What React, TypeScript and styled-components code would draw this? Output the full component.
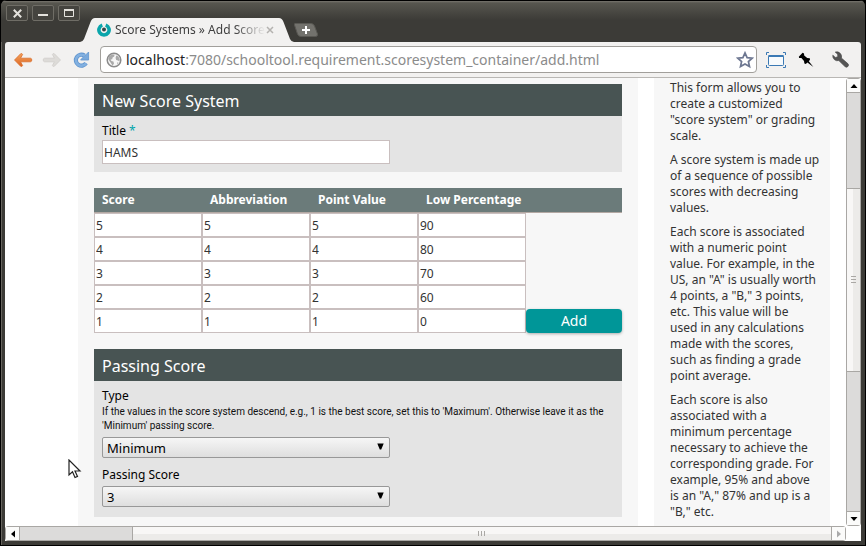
import React from "react";
import styled, { createGlobalStyle, css } from "styled-components";

const GlobalStyle = createGlobalStyle`
  *, *::before, *::after { box-sizing: border-box; }
  html, body, #root { height: 100%; }
  body {
    margin: 0;
    background: #000;
    color: #333;
    font-family: "Noto Sans", "Open Sans", sans-serif;
    font-size: 12px;
    line-height: 16px;
    overflow: hidden;
  }
  button, input, select { font: inherit; color: inherit; margin: 0; }
`;

/* ---------- window frame ---------- */

const BrowserWindow = styled.div`
  display: flex;
  flex-direction: column;
  height: 100vh;
  padding: 0 4px 4px;
  background: #3c3b37;
  border: 1px solid #000;
  border-top: 0;
  border-radius: 6px 6px 0 0;
  box-shadow: inset 1px 0 0 #66645e;
`;

const TitleBar = styled.header`
  display: flex;
  align-items: flex-start;
  flex: none;
  height: 42px;
  margin: 0 -4px;
  padding: 5px 5px 0;
  background: linear-gradient(#000 0, #000 1px, #77756e 1px, #57564f 3px, #3c3b37 20px);
  border-radius: 6px 6px 0 0;
`;

const WindowButtons = styled.div`
  display: flex;
  gap: 4px;
`;

const WindowButton = styled.button`
  display: grid;
  place-items: center;
  width: 22px;
  height: 16px;
  padding: 0;
  background: #45443f;
  border: 1px solid #6f6d66;
  border-radius: 2px;
`;

const Tab = styled.div`
  display: flex;
  align-items: flex-end;
  height: 24px;
  margin-top: 13px;
`;

const TabFace = styled.div`
  display: flex;
  align-items: center;
  width: 184px;
  height: 24px;
  padding: 0 4px 0 2px;
  background: #f2f1f0;
`;

const TabTitle = styled.span`
  flex: 1;
  margin-left: 4px;
  white-space: nowrap;
  font-size: 12px;
  color: #3f3f3f;
  mask-image: linear-gradient(to right, #000 80%, transparent 100%);
`;

const IconButton = styled.button<{ $w?: number }>`
  display: grid;
  place-items: center;
  flex: none;
  width: ${(p) => p.$w ?? 20}px;
  height: 20px;
  padding: 0;
  background: none;
  border: 0;
`;

const NewTabButton = styled(IconButton)`
  height: 14px;
  margin-top: 18px;
`;

const Toolbar = styled.nav`
  display: flex;
  align-items: center;
  flex: none;
  height: 36px;
  padding: 0 11px 0 8px;
  background: #f2f1f0;
  border-bottom: 1px solid #b9b7b4;
  border-radius: 3px 3px 0 0;
`;

const NavButtons = styled.div`
  display: flex;
  gap: 9px;
  margin-right: 9px;
`;

const AddressBox = styled.div`
  display: flex;
  align-items: center;
  flex: 1;
  gap: 4px;
  height: 27px;
  padding: 0 2px 0 5px;
  background: #fff;
  border: 1px solid #a19f9b;
  border-radius: 4px;
`;

const Address = styled.a`
  flex: 1;
  overflow: hidden;
  white-space: nowrap;
  font-size: 14px;
  line-height: 20px;
  color: #8b8b8b;
  text-decoration: none;
`;

const Host = styled.span`
  color: #222;
`;

const ToolButtons = styled.div`
  display: flex;
  align-items: center;
  gap: 10px;
  margin-left: 9px;

  & > :last-child { margin-left: 4px; }
`;

/* ---------- scroll bars ---------- */

const Viewport = styled.div`
  display: grid;
  grid-template-columns: minmax(0, 1fr) 15px;
  grid-template-rows: minmax(0, 1fr) 15px;
  flex: 1;
  min-height: 0;
  background: #fff;
`;

type Dir = { $vertical?: boolean };

const ScrollBar = styled.div<Dir>`
  display: flex;
  flex-direction: ${(p) => (p.$vertical ? "column" : "row")};
  background: #dcdbda;
  border: 1px solid #a9a7a4;
  border-radius: 3px;
`;

const ScrollButton = styled.button<Dir>`
  display: grid;
  place-items: center;
  flex: none;
  width: ${(p) => (p.$vertical ? "13px" : "14px")};
  height: ${(p) => (p.$vertical ? "14px" : "13px")};
  padding: 0;
  background: #fbfbfa;
  border: 0 solid #a9a7a4;
  &:first-child { ${(p) => (p.$vertical ? "border-bottom-width: 1px" : "border-right-width: 1px")}; }
  &:last-child { ${(p) => (p.$vertical ? "border-top-width: 1px" : "border-left-width: 1px")}; }
`;

const ScrollGap = styled.div<{ $grow: number }>`
  flex: ${(p) => p.$grow} 1 0;
`;

const ScrollThumb = styled.div<Dir & { $grow: number }>`
  display: flex;
  align-items: center;
  justify-content: center;
  flex: ${(p) => p.$grow} 1 0;
  border: 0 solid #a9a7a4;
  ${(p) =>
    p.$vertical
      ? css`
          border-width: 1px 0;
          background: linear-gradient(to right, #f8f7f6 50%, #ecebe9 50%);
        `
      : css`
          border-left-width: 1px;
          background: linear-gradient(#f8f7f6 50%, #ecebe9 50%);
        `}
`;

/* ---------- page ---------- */

const Page = styled.main`
  display: flex;
  gap: 16px;
  padding: 0 16px 0 73px;
  overflow: hidden;
`;

const Content = styled.form`
  display: flex;
  flex-direction: column;
  flex: 1;
  gap: 16px;
  min-width: 0;
  padding: 6px 16px 0;
  background: #f7f7f7;
`;

const Sidebar = styled.aside`
  flex: none;
  width: 176px;
  padding: 2px 0 0 16px;
  background: #f7f7f7;
`;

const Note = styled.p`
  margin: 0 0 8px;
  white-space: nowrap;
`;

const NoteLine = styled.span`
  display: block;
`;

const Section = styled.section`
  background: #e4e4e4;
`;

const SectionTitle = styled.h3`
  margin: 0;
  padding: 5px 8px 3px;
  background: #485453;
  color: #fff;
  font-size: 16px;
  font-weight: 400;
  line-height: 24px;
`;

const SectionBody = styled.div`
  display: flex;
  flex-direction: column;
  align-items: flex-start;
  padding: 7px 8px 8px;
`;

const Label = styled.label`
  margin-bottom: 1px;
  color: #000;
`;

const Required = styled.span`
  color: #00a5ab;
`;

const Hint = styled.p`
  margin: 0 0 4px;
  color: #111;
  font-family: Roboto, "Noto Sans", sans-serif;
  font-size: 10px;
  line-height: 14px;
`;

const TextInput = styled.input`
  display: block;
  width: 100%;
  height: 24px;
  padding: 0 1px;
  background: #fff;
  border: 1px solid #c9bfbf;
  border-radius: 0;
  outline: 0;
`;

const TitleInput = styled(TextInput)`
  width: 288px;
`;

const SelectBox = styled.div`
  display: grid;
  align-items: center;
  width: 288px;

  & + label { margin: 9px 0 3px; }
  &:last-child { margin-bottom: 2px; }
  & > * { grid-area: 1 / 1; }
  & > svg { justify-self: end; margin: 0 6px 2px 0; pointer-events: none; }
`;

const Select = styled.select`
  appearance: none;
  width: 100%;
  height: 21px;
  padding: 0 4px;
  background: linear-gradient(#f6f6f6, #dedede);
  border: 1px solid #989898;
  border-radius: 2px;
  color: #000;
  font-size: 13px;
`;

const ScoreTable = styled.table`
  width: 100%;
  table-layout: fixed;
  border-collapse: collapse;
  border-spacing: 0;
`;

const HeadCell = styled.th<{ $rest?: boolean }>`
  width: ${(p) => (p.$rest ? "auto" : "108px")};
  height: 25px;
  padding: 0 0 1px 8px;
  background: #6b7b7a;
  box-shadow: inset 0 -1px 0 #b3a8a3;
  color: #fff;
  font-weight: 700;
  text-align: left;
  white-space: nowrap;
`;

const Cell = styled.td`
  padding: 0;
`;

const AddButton = styled.button`
  display: block;
  width: 100%;
  height: 24px;
  padding: 0;
  background: #009698;
  border: 0;
  border-radius: 4px;
  box-shadow: 0 1px 3px rgba(0, 0, 0, 0.3);
  color: #fff;
  font-size: 14px;
  line-height: 24px;
`;

const Pointer = styled.svg`
  position: fixed;
  left: 68px;
  top: 459px;
  pointer-events: none;
`;

/* ---------- data ---------- */

const columns = ["Score", "Abbreviation", "Point Value", "Low Percentage"];

const scores = [
  ["5", "5", "5", "90"],
  ["4", "4", "4", "80"],
  ["3", "3", "3", "70"],
  ["2", "2", "2", "60"],
  ["1", "1", "1", "0"],
];

const notes = [
  ["This form allows you to", "create a customized", '"score system" or grading', "scale."],
  ["A score system is made up", "of a sequence of possible", "scores with decreasing", "values."],
  [
    "Each score is associated",
    "with a numeric point",
    "value. For example, in the",
    'US, an "A" is usually worth',
    '4 points, a "B," 3 points,',
    "etc. This value will be",
    "used in any calculations",
    "made with the scores,",
    "such as finding a grade",
    "point average.",
  ],
  [
    "Each score is also",
    "associated with a",
    "minimum percentage",
    "necessary to achieve the",
    "corresponding grade. For",
    "example, 95% and above",
    'is an "A," 87% and up is a',
    '"B," etc.',
  ],
];

/* ---------- drawings ---------- */

const Favicon = () => (
  <svg width="14" height="14" viewBox="0 0 14 14">
    <path d="M5.3 2.100a5.100 5.100 0 1 0 3.400 0" fill="none" stroke="#0aa5ab" strokeWidth="3.600" />
    <circle cx="7" cy="6.6" r="2" fill="#33474a" />
  </svg>
);

const Back = ({ faded }: { faded?: boolean }) => (
  <svg width="20" height="16" viewBox="0 0 20 16">
    <defs>
      <linearGradient id="orange" x1="0" y1="0" x2="0" y2="1">
        <stop offset="0" stopColor="#f3a25c" />
        <stop offset="1" stopColor="#dd6420" />
      </linearGradient>
    </defs>
    <path
      d="M1.5 8 7.6 1.8Q9 1 9.6 2.4L7.6 6.2H17.4Q18.8 6.4 18.8 8T17.4 9.8H7.6L9.6 13.6Q9 15 7.6 14.2Z"
      fill={faded ? "#dddbd8" : "url(#orange)"}
      stroke={faded ? "#cfcdca" : "#d9702e"}
      strokeWidth=".8"
      transform={faded ? "matrix(-1 0 0 1 20 0)" : undefined}
    />
  </svg>
);

const Reload = () => (
  <svg width="18" height="18" viewBox="0 0 18 18">
    <path d="M14 12.200A5.500 5.500 0 1 1 12.400 4.600" fill="none" stroke="#5e93cd" strokeWidth="4.200" />
    <path d="M16.600 1V9H8.600L10.800 6.400 14 3.600Z" fill="#79a9dc" stroke="#5e93cd" strokeWidth=".8" />
    <path d="M14 12.200A5.500 5.500 0 1 1 12.400 4.600" fill="none" stroke="#82b0e0" strokeWidth="2.600" />
  </svg>
);

const Globe = () => (
  <svg width="16" height="16" viewBox="0 0 16 16">
    <circle cx="8" cy="8" r="6.8" fill="#f6f6f6" stroke="#8b8b8b" strokeWidth="1.5" />
    <path d="M3 4.2 5.6 2.5 8.6 2.6 8.2 4.6 6.6 5.6 6.2 7.2 4.6 7.4 5.4 9 7.4 9.6 8 11.4 6.6 13.8 5.2 11.4 3.6 9.2 2.2 7Z M10.2 3.6 12.4 4.6 13.8 7.4 13.4 9.6 12 8.4 10.2 8 9.6 6Z M11 10.6 12.4 10.4 11.4 12.6Z" fill="#a9a9a9" />
  </svg>
);

const Star = () => (
  <svg width="18" height="18" viewBox="0 0 18 18">
    <path
      d="M9 1.9 11.1 6.6 16.2 7.1 12.4 10.5 13.5 15.6 9 12.9 4.5 15.6 5.6 10.5 1.8 7.1 6.9 6.6Z"
      fill="#fff"
      stroke="#6d7791"
      strokeWidth="1.7"
    />
  </svg>
);

const Capture = () => (
  <svg width="20" height="18" viewBox="0 0 20 18" fill="none" stroke="#3b79b4">
    <path d="M.5 4V1.5H3M17 1.5H19.5V4M19.5 14V16.5H17M3 16.5H.5V14" />
    <rect x="2.5" y="4.5" width="15" height="10" rx="1" fill="#f7fafc" />
    <path d="M2.5 5H17.5" strokeWidth="2" />
  </svg>
);

const Pin = () => (
  <svg width="16" height="16" viewBox="0 0 16 16">
    <path d="M4.6.8 6 1.4 6.2 3.6 9.2 6 11.8 6.2 12 7.8 10.8 9.2 15.4 15 9.400 10.400 7.8 12 6.400 11.4 6 9 3.400 6 1.2 6 .8 4.8Z" fill="#000" />
  </svg>
);

const Wrench = () => (
  <svg width="17" height="17" viewBox="0 0 17 17">
    <path d="M3.2 1.1A4.8 4.8 0 0 1 9.4 7L15.8 12.6A2 2 0 0 1 13 15.6L6.8 9.6A4.8 4.8 0 0 1 .8 4.2L3.4 6.4 5.8 5.8 5.6 3.2Z" fill="#555" stroke="#444" strokeWidth=".6" />
  </svg>
);

const Triangle = ({ d, fill = "#000" }: { d: string; fill?: string }) => (
  <svg width="8" height="8" viewBox="0 0 8 8">
    <path d={d} fill={fill} />
  </svg>
);

const Grip = ({ vertical }: { vertical?: boolean }) => (
  <svg width="8" height="8" viewBox="0 0 8 8" stroke="#aaa8a5">
    <path d={vertical ? "M1 .5H6M1 3.5H6M1 6.5H6" : "M.5 1V6M3.5 1V6M6.5 1V6"} />
  </svg>
);

const SelectArrow = () => (
  <svg width="7" height="7" viewBox="0 0 7 7">
    <path d="M.3.5H6.7L4.2 6.5H2.8Z" fill="#000" />
  </svg>
);

/* ---------- app ---------- */

export default function App() {
  return (
    <>
      <GlobalStyle />
      <BrowserWindow>
        <TitleBar>
          <WindowButtons>
            <WindowButton aria-label="Close window">
              <svg width="9" height="9" stroke="#e4e2dd" strokeWidth="2"><path d="M.8.8 8.2 8.2M8.2.8.8 8.2" /></svg>
            </WindowButton>
            <WindowButton aria-label="Minimize">
              <svg width="10" height="9"><path d="M0 6H10" stroke="#e4e2dd" strokeWidth="2" /></svg>
            </WindowButton>
            <WindowButton aria-label="Maximize">
              <svg width="10" height="8"><path d="M.5 1H9.5V7.5H.5Z" fill="none" stroke="#e4e2dd" /><path d="M0 1H10" stroke="#e4e2dd" strokeWidth="2" /></svg>
            </WindowButton>
          </WindowButtons>
          <Tab>
            <svg width="15" height="24" viewBox="0 0 15 24"><path d="M0 24Q3 23.500 4 21L10.500 4Q12 0 15 0V24Z" fill="#f2f1f0" /></svg>
            <TabFace>
              <Favicon />
              <TabTitle>Score Systems » Add Score</TabTitle>
              <IconButton $w={10} aria-label="Close tab">
                <svg width="8" height="8" stroke="#b4b2af" strokeWidth="1.500"><path d="M1 1 7 7M7 1 1 7" /></svg>
              </IconButton>
            </TabFace>
            <svg width="15" height="24" viewBox="0 0 15 24"><path d="M15 24Q12 23.500 11 21L4.500 4Q3 0 0 0V24Z" fill="#f2f1f0" /></svg>
          </Tab>
          <NewTabButton $w={24} aria-label="New tab">
            <svg width="24" height="14" viewBox="0 0 24 14">
              <path d="M1 .5H17Q19.500.5 20.500 3L23.500 11Q24 13.500 21.500 13.500H7Q4.500 13.500 3.500 11L.5 2Q0 .5 1 .5Z" fill="#73726d" stroke="#5a5954" />
              <path d="M12 3V11M8 7H16" stroke="#fff" strokeWidth="2" />
            </svg>
          </NewTabButton>
        </TitleBar>

        <Toolbar>
          <NavButtons>
            <IconButton aria-label="Back"><Back /></IconButton>
            <IconButton aria-label="Forward"><Back faded /></IconButton>
            <IconButton aria-label="Reload"><Reload /></IconButton>
          </NavButtons>
          <AddressBox>
            <Globe />
            <Address href="#">
              <Host>localhost</Host>:7080/schooltool.requirement.scoresystem_container/add.html
            </Address>
            <IconButton $w={18} aria-label="Bookmark"><Star /></IconButton>
          </AddressBox>
          <ToolButtons>
            <IconButton aria-label="Capture screen"><Capture /></IconButton>
            <IconButton aria-label="Pin"><Pin /></IconButton>
            <IconButton aria-label="Settings"><Wrench /></IconButton>
          </ToolButtons>
        </Toolbar>

        <Viewport>
          <Page>
            <Content onSubmit={(e) => e.preventDefault()}>
              <Section>
                <SectionTitle>New Score System</SectionTitle>
                <SectionBody>
                  <Label htmlFor="title">Title <Required>*</Required></Label>
                  <TitleInput id="title" defaultValue="HAMS" />
                </SectionBody>
              </Section>

              <ScoreTable>
                <thead>
                  <tr>
                    {columns.map((name) => <HeadCell key={name} scope="col">{name}</HeadCell>)}
                    <HeadCell $rest as="td" />
                  </tr>
                </thead>
                <tbody>
                  {scores.map((row, r) => (
                    <tr key={r}>
                      {row.map((value, c) => (
                        <Cell key={c}>
                          <TextInput aria-label={`${columns[c]} ${r + 1}`} defaultValue={value} />
                        </Cell>
                      ))}
                      <Cell>{r === scores.length - 1 && <AddButton type="button">Add</AddButton>}</Cell>
                    </tr>
                  ))}
                </tbody>
              </ScoreTable>

              <Section>
                <SectionTitle>Passing Score</SectionTitle>
                <SectionBody>
                  <Label htmlFor="type">Type</Label>
                  <Hint>
                    If the values in the score system descend, e.g., 1 is the best score, set this to 'Maximum'. Otherwise leave it as the
                    <br />
                    'Minimum' passing score.
                  </Hint>
                  <SelectBox>
                    <Select id="type" defaultValue="Minimum">
                      <option>Minimum</option>
                      <option>Maximum</option>
                    </Select>
                    <SelectArrow />
                  </SelectBox>
                  <Label htmlFor="passing">Passing Score</Label>
                  <SelectBox>
                    <Select id="passing" defaultValue="3">
                      {scores.map(([score]) => <option key={score}>{score}</option>)}
                    </Select>
                    <SelectArrow />
                  </SelectBox>
                </SectionBody>
              </Section>
            </Content>

            <Sidebar>
              {notes.map((lines) => (
                <Note key={lines[0]}>
                  {lines.map((line) => <NoteLine key={line}>{line} </NoteLine>)}
                </Note>
              ))}
            </Sidebar>
          </Page>

          <ScrollBar $vertical>
            <ScrollButton $vertical aria-label="Scroll up"><Triangle d="M4 2 7.500 6H.5Z" /></ScrollButton>
            <ScrollGap $grow={95} />
            <ScrollThumb $vertical $grow={183}><Grip vertical /></ScrollThumb>
            <ScrollGap $grow={140} />
            <ScrollButton $vertical aria-label="Scroll down"><Triangle d="M4 6 7.500 2H.5Z" /></ScrollButton>
          </ScrollBar>

          <ScrollBar>
            <ScrollButton aria-label="Scroll left"><Triangle d="M2 4 6 .5V7.500Z" /></ScrollButton>
            <ScrollGap $grow={112} />
            <ScrollThumb $grow={699}><Grip /></ScrollThumb>
            <ScrollButton aria-label="Scroll right"><Triangle d="M6 4 2 .5V7.500Z" fill="#aaa" /></ScrollButton>
          </ScrollBar>
        </Viewport>
      </BrowserWindow>

      <Pointer width="14" height="20" viewBox="0 0 14 20">
        <path d="M1 1V16L4.500 12.800 7 18.500 9.500 17.400 7 12H12Z" fill="#fff" stroke="#222" strokeWidth="1.200" />
      </Pointer>
    </>
  );
}
